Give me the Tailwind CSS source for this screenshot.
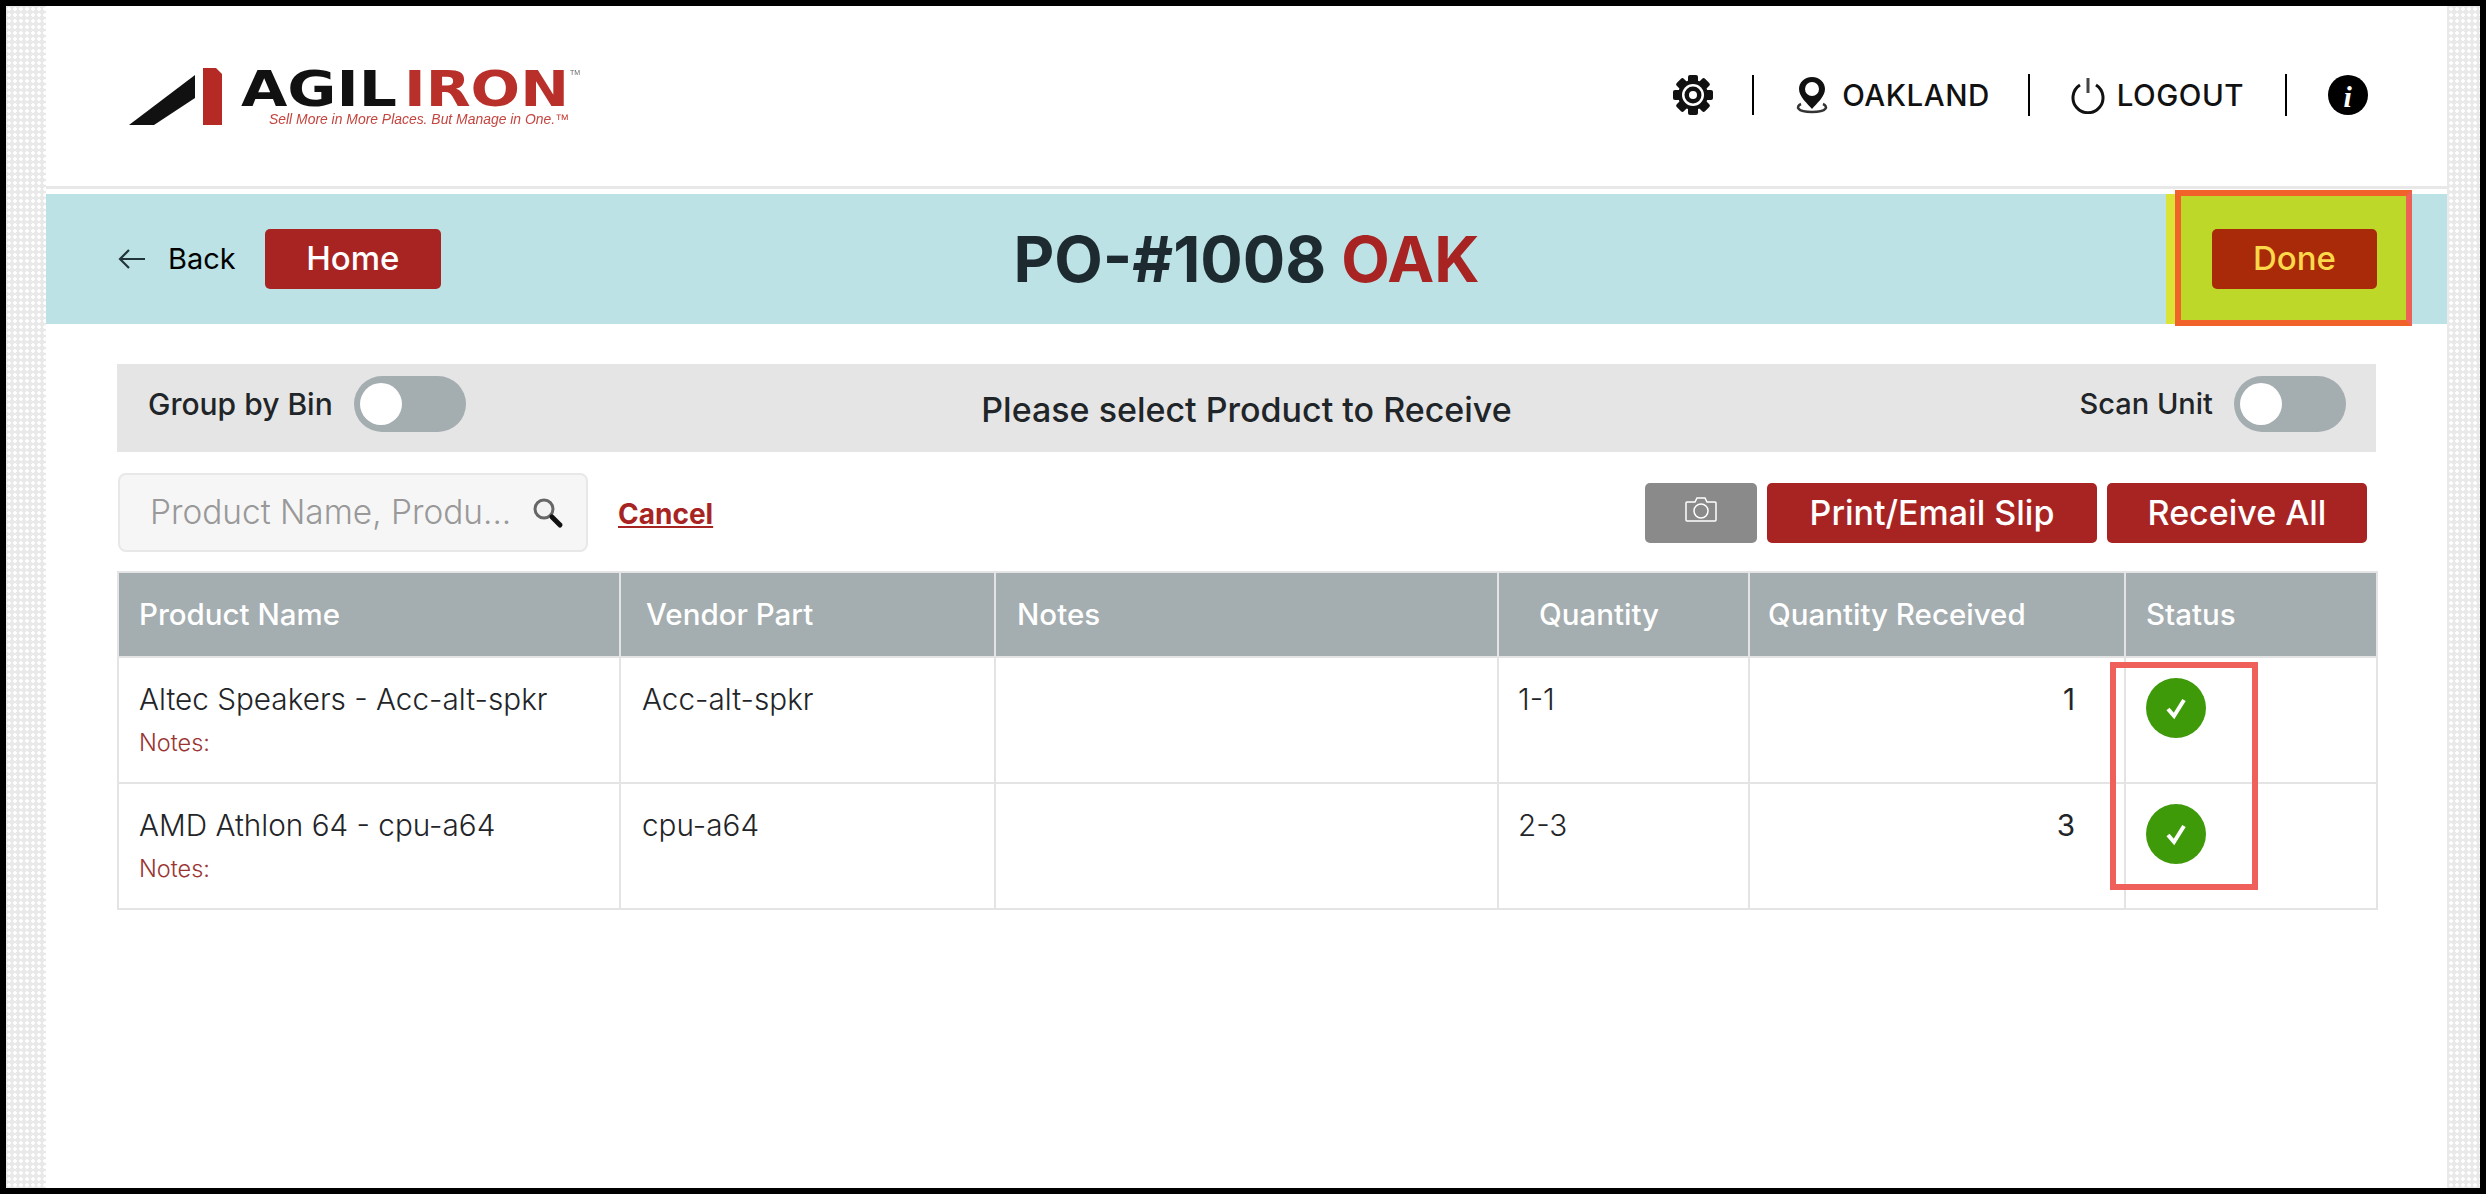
<!DOCTYPE html>
<html lang="en">
<head>
  <meta charset="UTF-8" />
  <title>PO-#1008 OAK</title>
  <script src="https://cdn.jsdelivr.net/npm/@tailwindcss/browser@4"></script>
</head>
<body class="bg-black">
  <div class="w-[2486px] h-[1194px] border-[6px] border-black overflow-hidden bg-[#f2f2f2] bg-[radial-gradient(#ffffff_1.5px,#e9e9e9_2px)] bg-[size:6px_6px] font-['Inter','Liberation_Sans',sans-serif] text-[#1f2528]">
    <!-- Page -->
    <div class="relative ml-[40px] w-[2401px] h-full bg-white">

      <!-- Header -->
      <header class="flex items-center h-[183px] pl-[74px] pr-[79px] border-b-[3px] border-[#e8e8e8]">
        <svg width="470" height="70" viewBox="0 0 470 70" class="blur-[0.6px] -mt-[1px]">
          <polygon points="9,64 34,64 75,37 75,14" fill="#111" />
          <path d="M83 7 H96 L102 13 V64 H83 Z" fill="#b52a24" />
          <text x="121" y="45" textLength="156" lengthAdjust="spacingAndGlyphs" font-family="DejaVu Sans" font-weight="700" font-size="49" fill="#111">AGIL</text>
          <text x="284" y="45" textLength="165" lengthAdjust="spacingAndGlyphs" font-family="DejaVu Sans" font-weight="700" font-size="49" fill="#b9302a">IRON</text>
          <text x="450" y="14" font-family="Liberation Sans" font-size="7" fill="#666">TM</text>
          <text x="120" y="63" dx="29" textLength="300" lengthAdjust="spacingAndGlyphs" font-family="Liberation Sans" font-style="italic" font-size="14" fill="#c4453f">Sell More in More Places. But Manage in One.™</text>
        </svg>

        <nav class="ml-auto flex items-center h-[42px] -mt-[2px] text-[29.5px] font-medium text-[#111] tracking-[0.5px]">
          <svg width="40" height="40" viewBox="0 0 40 40">
            <g fill="#111">
              <rect x="15" y="0" width="10" height="40" rx="2" />
              <rect x="15" y="0" width="10" height="40" rx="2" transform="rotate(45 20 20)" />
              <rect x="15" y="0" width="10" height="40" rx="2" transform="rotate(90 20 20)" />
              <rect x="15" y="0" width="10" height="40" rx="2" transform="rotate(135 20 20)" />
            </g>
            <circle cx="20" cy="20" r="15" fill="#111" />
            <circle cx="20" cy="20" r="11" fill="#fff" />
            <circle cx="20" cy="20" r="8.5" fill="#111" />
            <circle cx="20" cy="20" r="4" fill="#fff" />
          </svg>
          <span class="w-[2px] h-[40px] bg-black ml-[39px]"></span>
          <svg width="34" height="38" viewBox="0 0 34 38" class="ml-[41px]">
            <path d="M6 28 C1 30 1 36 17 36 C33 36 33 30 28 28" fill="none" stroke="#333" stroke-width="2.5" />
            <path d="M17 1 C25 1 30 7 30 13 C30 21 21 28 17 33 C13 28 4 21 4 13 C4 7 9 1 17 1 Z" fill="#111" />
            <circle cx="17" cy="13" r="7" fill="#fff" />
          </svg>
          <span class="ml-[13px]">OAKLAND</span>
          <span class="w-[2px] h-[42px] bg-black ml-[38px]"></span>
          <svg width="36" height="38" viewBox="0 0 36 38" class="ml-[40px]">
            <path d="M10 9 A15 15 0 1 0 26 9" fill="none" stroke="#111" stroke-width="3" />
            <path d="M18 2 V17" fill="none" stroke="#444" stroke-width="3" />
          </svg>
          <span class="ml-[11px]">LOGOUT</span>
          <span class="w-[2px] h-[42px] bg-black ml-[41px]"></span>
          <svg width="40" height="40" viewBox="0 0 40 40" class="ml-[41px]">
            <circle cx="20" cy="20" r="20" fill="#000" />
            <text x="20" y="32" text-anchor="middle" font-family="Liberation Serif" font-weight="700" font-style="italic" font-size="30" fill="#fff">i</text>
          </svg>
        </nav>
      </header>

      <!-- Title bar -->
      <div class="mt-[5px] h-[130px] bg-[#bce2e5] grid grid-cols-[1fr_auto_1fr] items-center">
        <div class="flex items-center pl-[72px]">
          <svg width="28" height="22" viewBox="0 0 28 22">
            <path d="M27 11 H2 M11 2 L2 11 L11 20" fill="none" stroke="#22353b" stroke-width="2.2" />
          </svg>
          <span class="ml-[22px] text-[29px] text-black">Back</span>
          <button class="ml-[29px] w-[176px] h-[60px] rounded-[5px] bg-[#a82423] text-white text-[33px] font-medium">Home</button>
        </div>
        <h1 class="text-[63px] font-bold text-[#1d2a30]">PO-#1008 <span class="text-[#a82423]">OAK</span></h1>
        <div class="flex justify-end pr-[39px] h-full">
          <div class="w-[242px] h-full bg-[#bdd828] border-l-[9px] border-[#dbe336] flex items-center">
            <button class="ml-[37px] w-[165px] h-[60px] rounded-[5px] bg-[#a92a08] text-[#fbd94a] text-[33px] font-medium">Done</button>
          </div>
        </div>
      </div>

      <!-- Body -->
      <main class="px-[71px]">
        <div class="mt-[40px] h-[88px] bg-[#e5e5e5] grid grid-cols-[1fr_auto_1fr] items-center">
          <div class="flex items-center pl-[31px] mb-[8px]">
            <span class="text-[30px] font-medium">Group by Bin</span>
            <div class="ml-[21px] w-[112px] h-[56px] rounded-full bg-[#a4adb0] pl-[6px] flex items-center">
              <div class="w-[42px] h-[42px] rounded-full bg-white"></div>
            </div>
          </div>
          <p class="mt-[2px] text-[34px] font-medium">Please select Product to Receive</p>
          <div class="flex items-center justify-end pr-[30px] mb-[8px]">
            <span class="text-[29px] font-medium">Scan Unit</span>
            <div class="ml-[21px] w-[112px] h-[56px] rounded-full bg-[#a4adb0] pl-[6px] flex items-center">
              <div class="w-[42px] h-[42px] rounded-full bg-white"></div>
            </div>
          </div>
        </div>

        <div class="mt-[21px] flex items-center h-[79px]">
          <div class="ml-[1px] w-[470px] h-full rounded-[8px] bg-[#f6f6f6] border-2 border-[#e8e8e8] flex items-center pl-[30px]">
            <span class="text-[33.4px] font-light text-[#999]">Product Name, Produ...</span>
            <svg width="32" height="32" viewBox="0 0 32 32" class="ml-auto mr-[22px]">
              <circle cx="12" cy="12" r="9" fill="#f2f2f2" stroke="#666" stroke-width="3" />
              <path d="M20 20 L28 28" stroke="#111" stroke-width="5" stroke-linecap="round" />
            </svg>
          </div>
          <a class="ml-[30px] mt-[2px] text-[28px] font-bold text-[#a82423] underline">Cancel</a>
          <div class="ml-auto mr-[9px] flex gap-[10px] h-[60px] text-white text-[34px] font-medium">
            <button class="w-[112px] rounded-[5px] bg-[#8a8a8a] flex justify-center pt-[13px]">
              <svg width="32" height="26" viewBox="0 0 32 26">
                <path d="M2 6 H10 L12 2 H20 L22 6 H30 Q31 6 31 7 V24 Q31 25 30 25 H2 Q1 25 1 24 V7 Q1 6 2 6 Z" fill="none" stroke="#fff" stroke-width="1.5" />
                <circle cx="16" cy="15" r="7" fill="none" stroke="#fff" stroke-width="1.5" />
              </svg>
            </button>
            <button class="w-[330px] rounded-[5px] bg-[#a82423]">Print/Email Slip</button>
            <button class="w-[260px] rounded-[5px] bg-[#a82423]">Receive All</button>
          </div>
        </div>

        <table class="mt-[19px] w-[2259px] table-fixed border-collapse text-[29.7px] font-light">
          <colgroup>
            <col class="w-[502px]" /><col class="w-[375px]" /><col class="w-[503px]" />
            <col class="w-[251px]" /><col class="w-[376px]" /><col class="w-[252px]" />
          </colgroup>
          <thead>
            <tr class="h-[85px] bg-[#a4adb0] text-white text-[29.5px] text-left">
              <th class="border-2 border-[#e4e4e4] font-medium pl-[20px]">Product Name</th>
              <th class="border-2 border-[#e4e4e4] font-medium pl-[25px]">Vendor Part</th>
              <th class="border-2 border-[#e4e4e4] font-medium pl-[21px]">Notes</th>
              <th class="border-2 border-[#e4e4e4] font-medium pl-[40px]">Quantity</th>
              <th class="border-2 border-[#e4e4e4] font-medium pl-[18px]">Quantity Received</th>
              <th class="border-2 border-[#e4e4e4] font-medium pl-[20px]">Status</th>
            </tr>
          </thead>
          <tbody>
            <tr class="h-[126px] align-top">
              <td class="border-2 border-[#e4e4e4] pl-[20px] pt-[23px] leading-[36px]">
                <div>Altec Speakers - Acc-alt-spkr</div>
                <div class="mt-[11px] text-[23.5px] leading-[30px] text-[#9a3432]">Notes:</div>
              </td>
              <td class="border-2 border-[#e4e4e4] pl-[21px] pt-[23px] leading-[36px]">Acc-alt-spkr</td>
              <td class="border-2 border-[#e4e4e4]"></td>
              <td class="border-2 border-[#e4e4e4] pl-[19px] pt-[23px] leading-[36px]">1-1</td>
              <td class="border-2 border-[#e4e4e4] pr-[49px] pt-[23px] leading-[36px] text-right font-normal">1</td>
              <td class="border-2 border-[#e4e4e4] pl-[20px] pt-[20px]">
                <div class="w-[60px] h-[60px] rounded-full bg-[#3f9a0a] flex items-center justify-center">
                  <svg width="22" height="24" viewBox="0 0 22 24"><path d="M3 13 L9 20 L19 4" fill="none" stroke="#fff" stroke-width="4" /></svg>
                </div>
              </td>
            </tr>
            <tr class="h-[126px] align-top">
              <td class="border-2 border-[#e4e4e4] pl-[20px] pt-[23px] leading-[36px]">
                <div>AMD Athlon 64 - cpu-a64</div>
                <div class="mt-[11px] text-[23.5px] leading-[30px] text-[#9a3432]">Notes:</div>
              </td>
              <td class="border-2 border-[#e4e4e4] pl-[21px] pt-[23px] leading-[36px]">cpu-a64</td>
              <td class="border-2 border-[#e4e4e4]"></td>
              <td class="border-2 border-[#e4e4e4] pl-[19px] pt-[23px] leading-[36px]">2-3</td>
              <td class="border-2 border-[#e4e4e4] pr-[49px] pt-[23px] leading-[36px] text-right font-normal">3</td>
              <td class="border-2 border-[#e4e4e4] pl-[20px] pt-[20px]">
                <div class="w-[60px] h-[60px] rounded-full bg-[#3f9a0a] flex items-center justify-center">
                  <svg width="22" height="24" viewBox="0 0 22 24"><path d="M3 13 L9 20 L19 4" fill="none" stroke="#fff" stroke-width="4" /></svg>
                </div>
              </td>
            </tr>
          </tbody>
        </table>
      </main>

      <!-- Review markers drawn on top of the screenshot -->
      <div class="absolute left-[2129px] top-[184px] w-[237px] h-[136px] border-[6px] border-[#f0622a] border-r-[#ee6158]"></div>
      <div class="absolute left-[2064px] top-[656px] w-[148px] h-[228px] border-[6px] border-[#f0605a]"></div>
    </div>
  </div>
</body>
</html>
